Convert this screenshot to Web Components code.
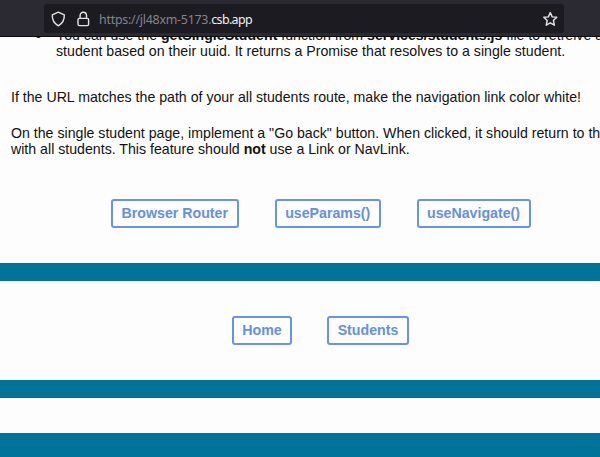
<!DOCTYPE html>
<html lang="en">
<head>
<meta charset="utf-8">
<title>Students</title>
<style>
html, body { margin: 0; height: 100%; overflow: hidden; background: #fefdfe; }
body { font-family: "Liberation Sans", Arial, sans-serif; }
</style>
</head>
<body>
<browser-window>
  <url-bar slot="bar"><span>https://jl48xm-5173.</span><b>csb.app</b></url-bar>
  <task-notes></task-notes>
  <link-row style="--top:42px;--gap:35.5px">
    <link-button style="--w:128.5px">Browser Router</link-button>
    <link-button style="--w:106.5px">useParams()</link-button>
    <link-button style="--w:114px">useNavigate()</link-button>
  </link-row>
  <color-band style="--h:18px"></color-band>
  <link-row style="--top:35px;--gap:35px">
    <link-button style="--w:60px">Home</link-button>
    <link-button style="--w:82px">Students</link-button>
  </link-row>
  <color-band style="--h:18px"></color-band>
  <color-band style="--h:24px;margin-top:35px"></color-band>
</browser-window>
<script>
function define(name, html) {
  const t = document.createElement('template');
  t.innerHTML = html;
  customElements.define(name, class extends HTMLElement {
    constructor() {
      super();
      this.attachShadow({ mode: 'open' }).append(t.content.cloneNode(true));
    }
  });
}
define('browser-window', `<style>
:host{display:flex;flex-direction:column;width:600px;height:457px;overflow:hidden}
main{display:flex;flex-direction:column;flex:1;min-height:0;overflow:hidden;background:#fefdfe}
</style><slot name="bar"></slot><main><slot></slot></main>`);
define('url-bar', `<style>
:host{display:flex;flex:none;box-sizing:border-box;height:37px;padding:4px 36px 4px 44px;background:#2b2a33;border-bottom:1px solid #0c0c0f}
.field{display:flex;align-items:center;flex:1;height:29px;background:#1c1b22;border-radius:3px;padding:0 6px}
svg{display:block;flex:none;fill:none;stroke:#e4e4e8;stroke-width:1.4;stroke-linejoin:round;stroke-linecap:round}
.lock{margin-left:9px}
.text{flex:1;margin:2px 0 0 8px;font:12.4px/18px "Noto Sans",sans-serif;letter-spacing:-.24px;white-space:nowrap;color:#85848b}
::slotted(b){font-weight:400;color:#f2f2f5;letter-spacing:-.62px}
</style><div class="field">
<svg width="16" height="16" viewBox="0 0 16 16"><path d="M8.3 1.2 L14.3 3.8 C14.6 9 12.6 12.4 8.3 14.8 C4 12.4 2 9 2.3 3.8 Z"/></svg>
<svg class="lock" width="16" height="16" viewBox="0 0 16 16"><rect x="3" y="7.4" width="10.6" height="7.2" rx="1.3"/><path d="M5.1 7.2V4.5a3.2 3.2 0 0 1 6.4 0V7.2"/></svg>
<div class="text"><slot></slot></div>
<svg width="16" height="16" viewBox="0 0 16 16"><path d="M8.3 1.6 L10.2 5.9 L14.8 6.3 L11.4 9.5 L12.4 14.2 L8.3 11.8 L4.2 14.2 L5.2 9.5 L1.8 6.3 L6.4 5.9 Z"/></svg>
</div>`);
define('task-notes', `<style>
:host{display:block;flex:none;height:120px;color:#111;font-size:14.16px;line-height:16px;white-space:nowrap}
ul{list-style:none;margin:-10px 0 0;padding:0 0 0 36px}
li{display:flex;gap:15px}
li::before{content:"";flex:none;width:5px;height:5px;margin-top:6px;border-radius:50%;background:#111}
p{margin:0 0 0 11px}
.a{margin-top:30px}.b{margin-top:20px}
</style><ul><li><div>You can use the <b>getSingleStudent</b> function from <b>services/students.js</b> file to retreive a<br>student based on their uuid. It returns a Promise that resolves to a single student.</div></li></ul>
<p class="a">If the URL matches the path of your all students route, make the navigation link color white!</p>
<p class="b">On the single student page, implement a "Go back" button. When clicked, it should return to the<br>with all students. This feature should <b>not</b> use a Link or NavLink.</p>`);
define('link-row', `<style>
:host{display:flex;flex:none;box-sizing:border-box;width:641px;justify-content:center;gap:var(--gap);padding-top:var(--top);padding-bottom:35px}
</style><slot></slot>`);
define('link-button', `<style>
:host{display:flex;flex:none;align-items:center;justify-content:center;box-sizing:border-box;width:var(--w);height:29px;border:2px solid #6495e8;border-radius:3px;color:#6490e4;font-weight:700;font-size:14.2px;line-height:16px;white-space:nowrap;padding-bottom:1px}
</style><slot></slot>`);
define('color-band', `<style>:host{display:block;flex:none;height:var(--h);background:#007399}</style>`);
</script>
</body>
</html>
